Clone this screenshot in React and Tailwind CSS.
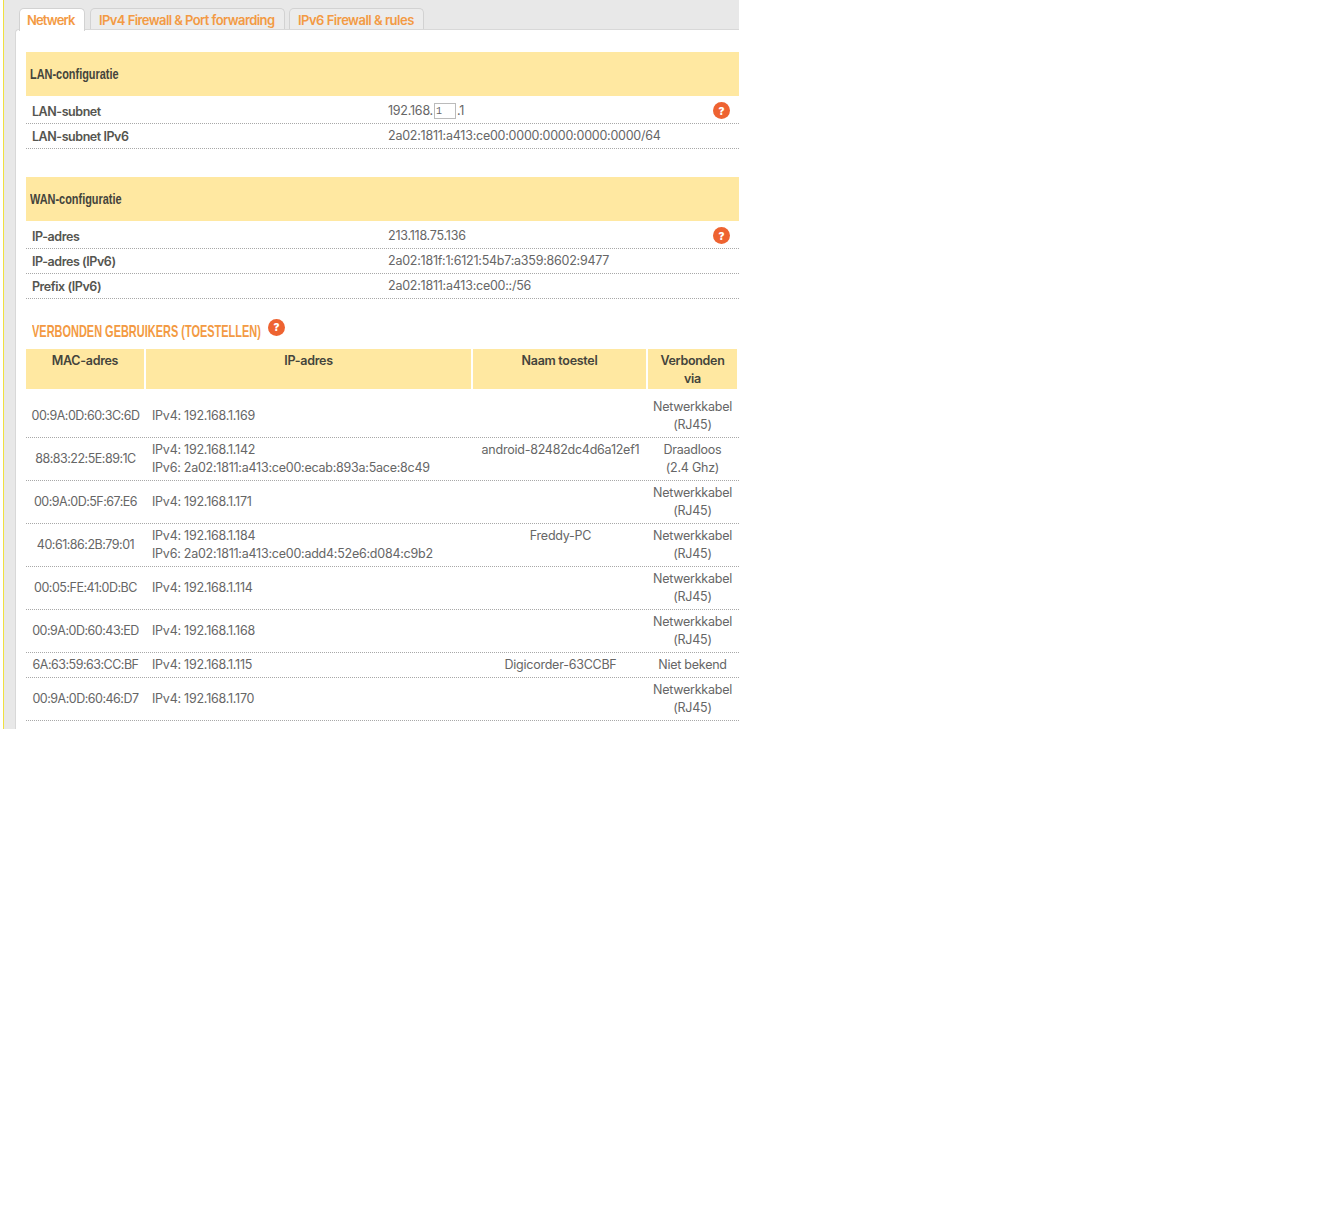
import React from 'react';

const devices = [
  { mac: '00:9A:0D:60:3C:6D', ip: ['IPv4: 192.168.1.169'], name: '', via: ['Netwerkkabel', '(RJ45)'], h: 'h-[49px] pt-[6px]' },
  { mac: '88:83:22:5E:89:1C', ip: ['IPv4: 192.168.1.142', 'IPv6: 2a02:1811:a413:ce00:ecab:893a:5ace:8c49'], name: 'android-82482dc4d6a12ef1', via: ['Draadloos', '(2.4 Ghz)'], h: 'h-[43px]' },
  { mac: '00:9A:0D:5F:67:E6', ip: ['IPv4: 192.168.1.171'], name: '', via: ['Netwerkkabel', '(RJ45)'], h: 'h-[43px]' },
  { mac: '40:61:86:2B:79:01', ip: ['IPv4: 192.168.1.184', 'IPv6: 2a02:1811:a413:ce00:add4:52e6:d084:c9b2'], name: 'Freddy-PC', via: ['Netwerkkabel', '(RJ45)'], h: 'h-[43px]' },
  { mac: '00:05:FE:41:0D:BC', ip: ['IPv4: 192.168.1.114'], name: '', via: ['Netwerkkabel', '(RJ45)'], h: 'h-[43px]' },
  { mac: '00:9A:0D:60:43:ED', ip: ['IPv4: 192.168.1.168'], name: '', via: ['Netwerkkabel', '(RJ45)'], h: 'h-[43px]' },
  { mac: '6A:63:59:63:CC:BF', ip: ['IPv4: 192.168.1.115'], name: 'Digicorder-63CCBF', via: ['Niet bekend'], h: 'h-[25px]' },
  { mac: '00:9A:0D:60:46:D7', ip: ['IPv4: 192.168.1.170'], name: '', via: ['Netwerkkabel', '(RJ45)'], h: 'h-[43px]' },
];

const Help = ({ className = '' }) => (
  <span className={`flex h-[17px] w-[17px] items-center justify-center rounded-full bg-[#ee6331] text-[10px] font-black leading-none text-white ${className}`}>?</span>
);

const Tab = ({ label, active, className }) => (
  <div className={`rounded-t-[5px] border border-b-0 border-[#d2d2d2] text-[13px] font-semibold leading-[23px] text-[#f39a43] ${active ? 'relative z-10 -mb-[2px] h-[23px] bg-white' : 'h-[21px] bg-[#ececec]'} ${className}`}>
    {label}
  </div>
);

const SectionHead = ({ children }) => (
  <div className="flex h-[44px] items-center bg-[#ffe8a1] pl-[4px] font-['Liberation_Sans',sans-serif] text-[14px] font-bold text-[#44443c]">
    <span className="inline-block origin-left scale-x-[0.78]">{children}</span>
  </div>
);

const InfoRow = ({ label, value, help, h = 'h-[25px]' }) => (
  <div className={`flex ${h} items-end border-b border-dotted border-[#a8a8a8] pb-[3px]`}>
    <div className="w-[356px] pl-[6px] text-[12.5px] font-semibold leading-[16px] tracking-[-0.45px] text-[#55554f]">{label}</div>
    <div className="flex-1 pl-[6px] text-[12.5px] leading-[18px] tracking-[-0.24px] text-[#666]">{value}</div>
    {help && <Help className="mb-[1px] mr-[9px]" />}
  </div>
);

const DeviceRow = ({ d }) => (
  <div className={`flex ${d.h} items-center border-b border-dotted border-[#a8a8a8] text-[12.5px] leading-[18px] tracking-[-0.24px] text-[#666]`}>
    <div className="w-[119px] text-center tracking-[-0.5px]">{d.mac}</div>
    <div className="w-[328px] pl-[7px]">
      {d.ip.map((line) => <div key={line}>{line}</div>)}
    </div>
    <div className="w-[175px] self-start pt-[3px] text-center">{d.name}</div>
    <div className="w-[89px] self-start pt-[3px] text-center">
      {d.via.map((line) => <div key={line}>{line}</div>)}
    </div>
  </div>
);

export default function App() {
  return (
    <div className="ml-[3px] flex h-[729px] w-[736px] flex-col border-l border-[#f0e040] bg-[#e8e8e8] font-['Inter','Liberation_Sans',sans-serif]">
      <div className="flex h-[29px] shrink-0 items-end pl-[15px]">
        <Tab label="Netwerk" active className="w-[66px] pl-[7px] tracking-[-0.85px]" />
        <Tab label="IPv4 Firewall & Port forwarding" className="ml-[5px] w-[195px] pl-[8px] tracking-[-0.58px]" />
        <Tab label="IPv6 Firewall & rules" className="ml-[4px] w-[135px] pl-[8px] tracking-[-0.5px]" />
      </div>
      <div className="ml-[11px] flex-1 rounded-tl-[4px] border-l border-t border-[#d8d8d8] bg-white pl-[10px] pt-[22px]">
        <SectionHead>LAN-configuratie</SectionHead>
        <InfoRow label="LAN-subnet" h="h-[28px]" help value={
          <span className="flex items-center">192.168.<span className="ml-[1px] h-[16px] w-[22px] border border-[#bbb] pl-[1px] font-['Liberation_Mono'] text-[10px] leading-[16px] tracking-normal">1</span><span className="ml-[1px]">.1</span></span>
        } />
        <InfoRow label="LAN-subnet IPv6" value="2a02:1811:a413:ce00:0000:0000:0000:0000/64" />

        <div className="mt-[28px]">
          <SectionHead>WAN-configuratie</SectionHead>
        </div>
        <InfoRow label="IP-adres" h="h-[28px]" help value="213.118.75.136" />
        <InfoRow label="IP-adres (IPv6)" value="2a02:181f:1:6121:54b7:a359:8602:9477" />
        <InfoRow label="Prefix (IPv6)" value="2a02:1811:a413:ce00::/56" />

        <div className="flex h-[50px] items-center pl-[6px] pt-[16px]">
          <span className="w-[228px] whitespace-nowrap font-['Liberation_Sans',sans-serif] text-[17px] font-bold text-[#f39a43]">
            <span className="inline-block origin-left scale-x-[0.645]">VERBONDEN GEBRUIKERS (TOESTELLEN)</span>
          </span>
          <Help className="mb-[10px] ml-[8px]" />
        </div>

        <div className="flex h-[40px] w-[712px] gap-[2px] text-center text-[12.5px] font-semibold leading-[18px] tracking-[-0.3px] text-[#44443c]">
          <div className="w-[118px] bg-[#ffe8a1] pt-[3px]">MAC-adres</div>
          <div className="w-[325px] bg-[#ffe8a1] pt-[3px]">IP-adres</div>
          <div className="w-[173px] bg-[#ffe8a1] pt-[3px]">Naam toestel</div>
          <div className="w-[89px] bg-[#ffe8a1] px-[8px] pt-[3px]">Verbonden via</div>
        </div>
        {devices.map((d) => <DeviceRow key={d.mac} d={d} />)}
      </div>
    </div>
  );
}
